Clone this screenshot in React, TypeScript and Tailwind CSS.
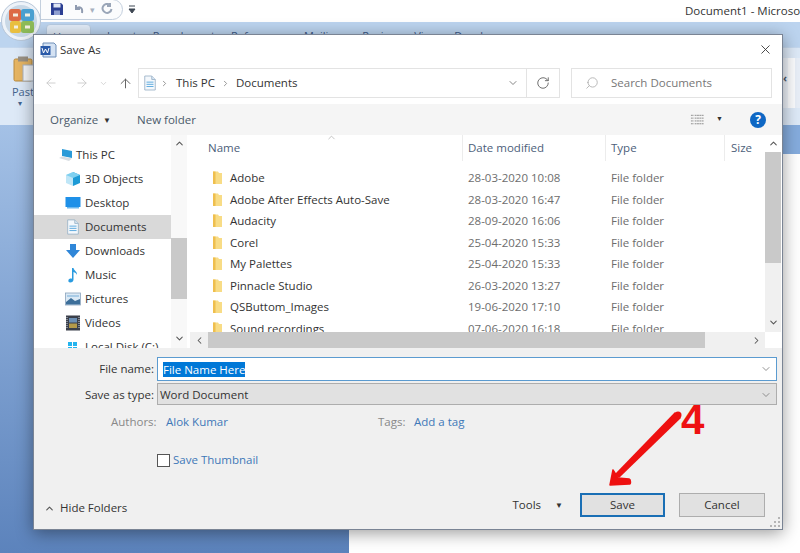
import { ArrowLeft, ArrowRight, ArrowUp, ChevronDown, ChevronLeft, ChevronRight, ChevronUp, RotateCw, Search, X } from 'lucide-react'

const files = [
  ['Adobe', '28-03-2020 10:08'],
  ['Adobe After Effects Auto-Save', '28-03-2020 16:47'],
  ['Audacity', '28-09-2020 16:06'],
  ['Corel', '25-04-2020 15:33'],
  ['My Palettes', '25-04-2020 15:33'],
  ['Pinnacle Studio', '26-03-2020 13:27'],
  ['QSButtom_Images', '19-06-2020 17:10'],
  ['Sound recordings', '07-06-2020 16:18'],
]

function DocIcon({ className }: { className?: string }) {
  return (
    <svg viewBox="0 0 16 18" className={className}>
      <path d="M2 1h8l4 4v12H2z" fill="#f4f8fc" stroke="#9db4c8" />
      <path d="M10 1v4h4" fill="#d6e6f4" stroke="#9db4c8" />
      <path d="M4 8h8M4 10.500h8M4 13h8" stroke="#4fa3dc" strokeWidth="1" />
    </svg>
  )
}

function NavIcon({ name }: { name: string }) {
  if (name === '3D Objects') return (
    <svg viewBox="0 0 16 16" className="w-4 h-4">
      <path d="M8 1l7 3v8l-7 3z" fill="#1c9ad6" />
      <path d="M8 1L1 4v8l7 3z" fill="#bfe6f7" />
      <path d="M1 4l7 3 7-3-7-3z" fill="#7fd0f0" />
    </svg>
  )
  if (name === 'Desktop') return (
    <svg viewBox="0 0 16 16" className="w-4 h-4">
      <rect x="0.500" y="2" width="15" height="10" fill="#1e90e8" />
      <rect x="2" y="12" width="12" height="1.500" fill="#6bb8ee" />
    </svg>
  )
  if (name === 'Documents') return <DocIcon className="w-4 h-4" />
  if (name === 'Downloads') return (
    <svg viewBox="0 0 16 16" className="w-4 h-4">
      <path d="M5 1h6v6h4l-7 8-7-8h4z" fill="#2f86d8" />
    </svg>
  )
  if (name === 'Music') return (
    <svg viewBox="0 0 16 16" className="w-4 h-4">
      <path d="M7 1h1.500c.5 3 4 3.500 3.500 7-.7-1.800-2-2.500-3.500-3v7.500c0 1.800-1.500 3-3.200 3S3 14.500 3.500 13c.5-1.300 2-1.800 3.500-1.200z" fill="#2a9be0" />
    </svg>
  )
  if (name === 'Pictures') return (
    <svg viewBox="0 0 16 16" className="w-4 h-4">
      <rect x="0.500" y="2" width="15" height="12" fill="#dbe9f5" stroke="#8aa4bc" strokeWidth="0.800" />
      <path d="M1 11l5-4 4 3 5-2v5.500H1z" fill="#3d6f9a" />
      <rect x="2" y="4" width="12" height="2" fill="#a8cbe6" />
    </svg>
  )
  if (name === 'Videos') return (
    <svg viewBox="0 0 16 16" className="w-4 h-4">
      <rect x="1" y="0.500" width="14" height="15" fill="#3a3f4a" />
      <rect x="4" y="3" width="8" height="4.500" fill="#6b8fb5" />
      <rect x="4" y="8.500" width="8" height="4.500" fill="#b49a4a" />
      <path d="M2 2v12M14 2v12" stroke="#cfd6de" strokeWidth="1" strokeDasharray="1 1" />
    </svg>
  )
  return (
    <svg viewBox="0 0 16 16" className="w-4 h-4">
      <path d="M3 3h4v4H3zM8 3h4v4H8zM3 8h4v4H3zM8 8h4v4H8z" fill="#25b4ee" />
    </svg>
  )
}

function FolderIcon() {
  return (
    <svg viewBox="0 0 11 15" className="w-[11px] h-[15px] shrink-0">
      <path d="M1 1.500h5l1 1.500h3v11H1z" fill="#f8dc86" />
      <path d="M1 1.500h2.500v12.500H1z" fill="#efbf4e" />
    </svg>
  )
}

function Ribbon() {
  return (
    <>
      <div className="h-[22px] bg-white relative overflow-hidden">
        <div className="flex items-center h-[20px] pl-[40px]">
          <div className="w-[83px] h-[21px] -mt-[2px] border border-[#c4d0de] rounded-r-full bg-[#fbfcfd] flex items-center pl-[10px]">
            <svg viewBox="0 0 12 12" className="w-3 h-3">
              <path d="M0 0h10l2 2v10H0z" fill="#2c3f93" />
              <rect x="2.500" y="0.500" width="7" height="4" fill="#dfe6f4" />
              <rect x="3" y="7.500" width="6" height="4.500" fill="#8f9fd0" />
            </svg>
            <svg viewBox="0 0 12 12" className="w-3 h-3 ml-[10px]" fill="none" stroke="#8f9bb0" strokeWidth="2">
              <path d="M3 2v4h4M3 6c3-3 7-2 6 4" />
            </svg>
            <span className="ml-[5px] text-[9px] leading-none text-[#a7b1bf]">▾</span>
            <svg viewBox="0 0 12 12" className="w-3 h-3 ml-[6px]" fill="none" stroke="#9aa6b8" strokeWidth="2">
              <path d="M9 2a4.500 4.500 0 1 0 1.500 4M9 0v3H6" />
            </svg>
          </div>
          <svg viewBox="0 0 8 10" className="w-2 h-[10px] ml-[5px]">
            <path d="M1 1h6M1 4h6L4 8z" fill="#3d4652" stroke="#3d4652" strokeWidth="1" />
          </svg>
        </div>
        <div className="absolute right-0 top-0 w-[115px] h-[22px] leading-[22px] text-[11.5px] text-[#333] whitespace-nowrap overflow-hidden">Document1 - Microsoft Word</div>
      </div>
      <div className="h-[25px] bg-[#bcd4ef] flex items-end pl-[46px] gap-[16px] text-[11px] text-[#3c5a86] whitespace-nowrap overflow-hidden">
        <span className="w-[45px] h-[23px] bg-[#e2ecf8] border border-[#b7cbe2] pt-1 text-center rounded-t-sm">Home</span>
        <span className="self-start pt-1.5">Insert</span>
        <span className="self-start pt-1.5">Page Layout</span>
        <span className="self-start pt-1.5">References</span>
        <span className="self-start pt-1.5">Mailings</span>
        <span className="self-start pt-1.5">Review</span>
        <span className="self-start pt-1.5">View</span>
        <span className="self-start pt-1.5">Developer</span>
      </div>
      <div className="h-[78px] bg-[#dde9f7] border-t border-[#c5d8ee] flex justify-between overflow-hidden">
        <div className="w-[33px] pl-[13px] pt-[8px] text-[11px] text-[#44648f] leading-none whitespace-nowrap overflow-hidden">
          <svg viewBox="0 0 22 26" className="w-[22px] h-[26px]">
            <rect x="1" y="3" width="18" height="22" rx="1.500" fill="#e6b563" stroke="#b88a3e" />
            <rect x="5" y="0.500" width="10" height="5" fill="#9a9184" />
            <rect x="10" y="9" width="12" height="16" fill="#f5f7fa" stroke="#a9b4c2" />
          </svg>
          <div className="mt-[4px] -ml-[1px]">Paste</div>
          <div className="mt-[2px] text-[8px] pl-[5px]">▾</div>
        </div>
        <div className="w-[17px] flex pt-[10px]">
          <span className="w-[5px] h-[50px] bg-[#eef3fa] text-[11px] font-bold leading-[40px] text-[#4d5a6a]">‹</span>
          <span className="w-[7px] h-[50px] bg-[#fbfcfe]" />
          <span className="w-[5px] h-[50px] bg-[#e8eef7]" />
        </div>
      </div>
    </>
  )
}

function Dialog() {
  return (
    <div className="absolute left-[33px] top-[34px] w-[750px] h-[496px] bg-[#f0f0f0] flex flex-col border border-[#7a8494] shadow-[0_3px_16px_rgba(0,0,0,0.4)]">
      <div className="h-[29px] shrink-0 bg-white flex items-center pl-[6px] pr-[9px]">
        <svg viewBox="0 0 17 16" className="w-[17px] h-4 mr-[3px]">
          <path d="M3 1h11l2 2v12H3z" fill="#d4e2f3" stroke="#6f8fb8" />
          <rect x="0.500" y="4" width="10" height="9" fill="#2a5aa8" />
          <path d="M2 6l1.500 5 2-4 2 4L9 6" stroke="#fff" strokeWidth="1" fill="none" />
        </svg>
        <span className="text-[11.5px] text-[#333]">Save As</span>
        <X className="ml-auto w-[15px] h-[15px] text-[#333]" strokeWidth={1.4} />
      </div>
      <div className="h-[40px] shrink-0 bg-white flex items-center pl-[10px] pr-[10px] pb-[2px]">
        <ArrowLeft className="w-[14px] h-[14px] text-[#c9c9c9]" strokeWidth={1.5} />
        <ArrowRight className="w-[14px] h-[14px] text-[#c9c9c9] ml-[17px]" strokeWidth={1.5} />
        <ChevronDown className="w-[9px] h-[9px] text-[#c9c9c9] ml-[10px]" strokeWidth={2} />
        <ArrowUp className="w-[15px] h-[15px] text-[#666] ml-[10px]" strokeWidth={1.6} />
        <div className="ml-[5px] w-[422px] h-[30px] border border-[#e3e3e3] flex items-center pl-[4px] pr-0 text-[11.5px] text-[#333]">
          <DocIcon className="w-[14px] h-4" />
          <ChevronRight className="w-[9px] h-[9px] text-[#777] ml-[3px]" strokeWidth={2} />
          <span className="ml-[7px]">This PC</span>
          <ChevronRight className="w-[9px] h-[9px] text-[#777] ml-[6px]" strokeWidth={2} />
          <span className="ml-[6px]">Documents</span>
          <ChevronDown className="ml-auto mr-[7px] w-[12px] h-[12px] text-[#666]" strokeWidth={1.6} />
          <div className="h-full w-[33px] border-l border-[#e3e3e3] flex items-center justify-center">
            <RotateCw className="w-[14px] h-[14px] text-[#666]" strokeWidth={1.6} />
          </div>
        </div>
        <div className="ml-[11px] w-[201px] h-[30px] border border-[#e3e3e3] flex items-center pl-[13px] text-[11.5px] text-[#777]">
          <Search className="w-[14px] h-[14px] text-[#aaa] -scale-x-100" strokeWidth={1.4} />
          <span className="ml-[12px]">Search Documents</span>
        </div>
      </div>
      <div className="h-[31px] shrink-0 bg-[#f5f5f5] flex items-center pl-[16px] pr-[15px] text-[11.5px] text-[#4a5a6a]">
        <span>Organize</span>
        <span className="ml-[5px] text-[8px] text-[#333]">▼</span>
        <span className="ml-[26px]">New folder</span>
        <svg viewBox="0 0 16 14" className="ml-auto w-[15px] h-[14px]" stroke="#8a8a8a" strokeWidth="1">
          <path d="M1 2h3M1 5h3M1 8h3M1 11h3M5 2h10M5 5h10M5 8h10M5 11h10" strokeDasharray="2 0.500" />
        </svg>
        <span className="ml-[11px] text-[7px] text-[#333]">▼</span>
        <span className="ml-[27px] mr-[1px] w-[16px] h-[16px] rounded-full bg-[#0e67c4] text-white text-[12px] font-bold leading-[16px] text-center">?</span>
      </div>
      <div className="h-[213px] shrink-0 bg-white flex pr-[1px]">
        <div className="w-[153px] shrink-0 flex">
          <div className="w-[137px] h-full pt-[8px] overflow-hidden text-[11.5px] text-[#333]">
            {['This PC', '3D Objects', 'Desktop', 'Documents', 'Downloads', 'Music', 'Pictures', 'Videos', 'Local Disk (C:)'].map((n) => (
              <div key={n} className={`h-[24px] shrink-0 flex items-center ${n === 'Documents' ? 'bg-[#d9d9d9]' : ''} ${n === 'This PC' ? 'pl-[24px]' : 'pl-[31px]'}`}>
                {n === 'This PC' ? (
                  <svg viewBox="0 0 16 14" className="w-4 h-[14px] mr-[2px]">
                    <path d="M4 1l10 2v7L4 8z" fill="#2a9ad8" />
                    <path d="M1 10l3-1.500 10 2-3 2.500z" fill="#d8dde2" />
                  </svg>
                ) : (
                  <>
                    <NavIcon name={n} />
                    <span className="w-[4px]" />
                  </>
                )}
                <span>{n}</span>
              </div>
            ))}
          </div>
          <div className="w-[16px] h-full bg-[#f8f8f8] flex flex-col items-center pt-[3px]">
            <ChevronUp className="w-[11px] h-[11px] text-[#555]" strokeWidth={2.2} />
            <div className="w-full h-[61px] mt-[89px] bg-[#c9c9c9]" />
            <ChevronDown className="w-[11px] h-[11px] text-[#555] mt-[34px]" strokeWidth={2.2} />
          </div>
        </div>
        <div className="ml-[3px] flex-1 min-w-0 flex flex-col relative">
          <div className="flex-1 min-h-0 flex">
            <div className="flex-1 min-w-0 overflow-hidden">
              <div className="h-[26px] flex items-center text-[11.5px] text-[#4c607a] relative">
                <span className="w-[273px] pl-[18px] h-full flex items-center border-r border-[#ececec]">Name</span>
                <span className="w-[143px] pl-[5px] h-full flex items-center border-r border-[#ececec]">Date modified</span>
                <span className="w-[119px] pl-[5px] h-full flex items-center border-r border-[#ececec]">Type</span>
                <span className="pl-[6px]">Size</span>
                <ChevronUp className="absolute left-[136px] -top-[3px] w-[11px] h-[11px] text-[#aaa]" strokeWidth={1.5} />
              </div>
              <div className="pt-[6px] text-[11.5px]">
                {files.map(([name, date]) => (
                  <div key={name} className="h-[21.500px] flex items-center">
                    <div className="w-[273px] pl-[22px] flex items-center text-[#333]">
                      <FolderIcon />
                      <span className="ml-[7px] whitespace-nowrap">{name}</span>
                    </div>
                    <span className="w-[143px] pl-[5px] text-[#6d6d6d]">{date}</span>
                    <span className="pl-[5px] text-[#6d6d6d]">File folder</span>
                  </div>
                ))}
              </div>
            </div>
            <div className="w-[16px] shrink-0 bg-[#f0f0f0] flex flex-col items-center">
              <div className="w-full h-[17px] bg-white flex items-center justify-center">
                <ChevronUp className="w-[11px] h-[11px] text-[#555]" strokeWidth={2.2} />
              </div>
              <div className="w-full h-[111px] bg-[#c9c9c9]" />
              <ChevronDown className="w-[11px] h-[11px] text-[#555] mt-[54px]" strokeWidth={2.2} />
            </div>
          </div>
          <div className="h-[16px] shrink-0 flex items-center bg-[#f0f0f0]">
            <div className="w-[18px] flex justify-center">
              <ChevronLeft className="w-[11px] h-[11px] text-[#555]" strokeWidth={2.2} />
            </div>
            <div className="w-[497px] h-full bg-[#c9c9c9]" />
            <ChevronRight className="w-[11px] h-[11px] text-[#555] ml-[46px]" strokeWidth={2.2} />
            <div className="ml-auto w-[16px] h-full bg-white" />
          </div>
        </div>
      </div>
      <div className="flex-1 min-h-0 pt-[9px] text-[11.5px] text-[#333] relative">
        <div className="flex items-center h-[24px] pl-[123px] pr-[5px]">
          <div className="w-[620px] h-full bg-white border border-[#5b9bd0] flex items-center pl-[5px] pr-[4px] relative">
            <span className="absolute right-full mr-[4px] whitespace-nowrap">File name:</span>
            <span className="bg-[#0078d7] text-white leading-[15px]">File Name Here</span>
            <ChevronDown className="ml-auto w-[12px] h-[12px] text-[#777]" strokeWidth={1.6} />
          </div>
        </div>
        <div className="flex items-center h-[22px] mt-[2px] pl-[123px] pr-[5px]">
          <div className="w-[620px] h-full pt-[1px] bg-[#e1e1e1] border border-[#adadad] flex items-center pl-[2px] pr-[4px] relative">
            <span className="absolute right-full mr-[4px] whitespace-nowrap">Save as type:</span>
            <span>Word Document</span>
            <ChevronDown className="ml-auto w-[12px] h-[12px] text-[#777]" strokeWidth={1.6} />
          </div>
        </div>
        <div className="flex items-center h-[17px] mt-[8px] pl-[77px]">
          <span className="w-[55px] text-[#888]">Authors:</span>
          <span className="w-[212px] text-[#3e78b8]">Alok Kumar</span>
          <span className="w-[36px] text-[#888]">Tags:</span>
          <span className="text-[#3e78b8]">Add a tag</span>
        </div>
        <div className="flex items-center mt-[23px] pl-[123px] h-[14px]">
          <span className="w-[13px] h-[13px] border border-[#555] bg-white" />
          <span className="ml-[3px] text-[#3e78b8]">Save Thumbnail</span>
        </div>
        <div className="absolute left-0 right-0 top-[145px] h-[24px] flex items-center pl-[10px] pr-[17px]">
          <div className="flex items-center mt-[6px]">
            <ChevronUp className="w-[11px] h-[11px] text-[#555]" strokeWidth={2.4} />
            <span className="ml-[5px]">Hide Folders</span>
          </div>
          <span className="ml-auto">Tools</span>
          <span className="ml-[14px] text-[8px]">▼</span>
          <button className="ml-[17px] w-[85px] h-[24px] bg-[#e1e1e1] border-2 border-[#1a6fb5]">Save</button>
          <button className="ml-[14px] w-[86px] h-[24px] bg-[#e1e1e1] border border-[#adadad]">Cancel</button>
        </div>
        <svg viewBox="0 0 12 12" className="absolute right-[1px] bottom-[1px] w-3 h-3" fill="#b5b5b5">
          <path d="M9 1h2v2H9zM9 5h2v2H9zM5 5h2v2H5zM9 9h2v2H9zM5 9h2v2H5zM1 9h2v2H1z" />
        </svg>
      </div>
    </div>
  )
}

export default function App() {
  return (
    <div className="w-[800px] h-[553px] relative overflow-hidden flex flex-col font-['Open_Sans','Noto_Sans',sans-serif]">
      <Ribbon />
      <div className="flex-1 min-h-0 flex">
        <div className="w-[349px] h-full bg-gradient-to-b from-[#a4c1e6] to-[#5c83bc]" />
        <div className="flex-1 flex flex-col">
          <div className="h-[29px] bg-[#85acdd]" />
          <div className="flex-1 bg-white" />
        </div>
      </div>
      {/* office button sits on top of the ribbon */}
      <svg viewBox="0 0 42 42" className="absolute left-0 top-0 w-[42px] h-[42px]">
        <circle cx="21" cy="21" r="19.500" fill="#eef3f9" stroke="#b7c6d8" />
        <circle cx="21" cy="21" r="16" fill="#c9d8e6" />
        <rect x="9" y="9" width="12" height="12" rx="2.500" fill="#dd6a45" />
        <rect x="21" y="9" width="13" height="12" rx="2.500" fill="#4a9fd0" />
        <rect x="10" y="21" width="11" height="12" rx="2.500" fill="#e9bf3f" />
        <rect x="21" y="21" width="13" height="12" rx="2.500" fill="#8dbb58" />
        <path d="M13 15h5M25 15h5M14 27h4M25 27h5" stroke="#f3eee0" strokeWidth="3" />
      </svg>
      <Dialog />
      {/* red annotation over the save button */}
      <svg viewBox="0 0 800 553" className="absolute inset-0 w-[800px] h-[553px] pointer-events-none">
        <path d="M675 412l6 6-62 60-4-4z" fill="#ee1111" />
        <path d="M613 470l-3 15 19-1c2 0 2-4 0-5l-11-1z" fill="#ee1111" stroke="#ee1111" strokeWidth="1.500" strokeLinejoin="round" />
        <circle cx="678" cy="415" r="3.500" fill="#ee1111" />
      </svg>
      <span className="absolute left-[681px] top-[396px] text-[42px] leading-[48px] font-bold text-[#ee1111] font-['Liberation_Sans',sans-serif]">4</span>
    </div>
  )
}
